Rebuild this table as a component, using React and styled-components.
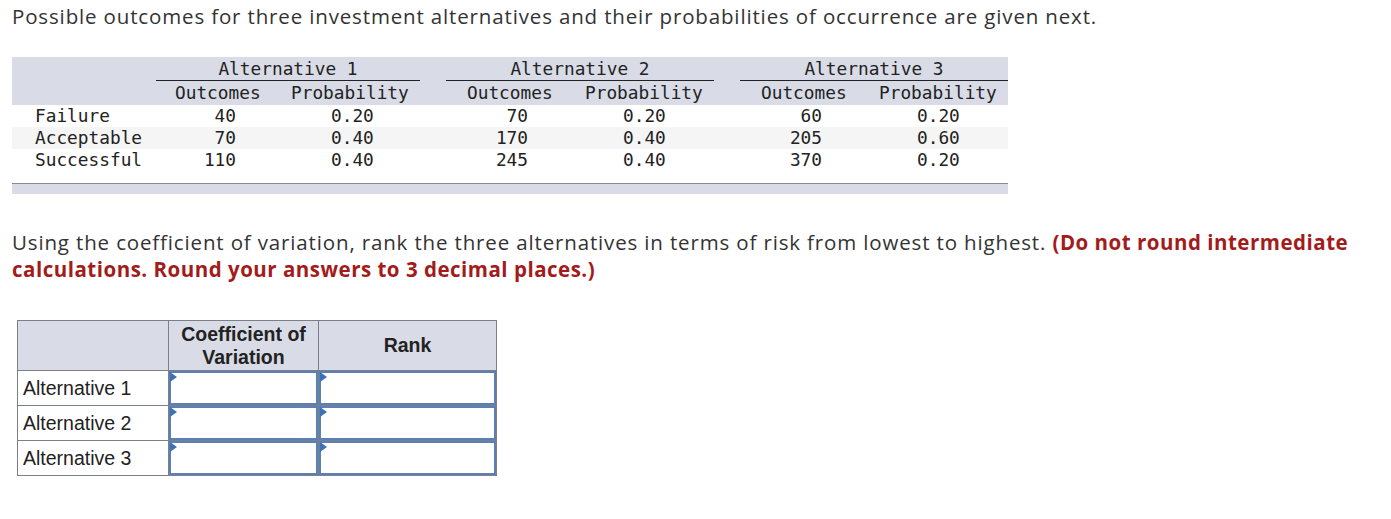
import React from 'react';
import styled, { createGlobalStyle } from 'styled-components';

const GlobalStyle = createGlobalStyle`
	body {
		margin: 0;
		background: #ffffff;
	}
`;

const Page = styled.div`
	padding: 3px 12px 0 12px;
	font-family: "Open Sans", "Liberation Sans", sans-serif;
	color: #333333;
`;

const Intro = styled.p`
	margin: 0;
	font-size: 20.5px;
	letter-spacing: 0.85px;
	line-height: 26px;
	font-weight: 400;
`;

const DataTable = styled.div`
	margin-top: 28px;
	width: 996px;
	display: grid;
	grid-template-columns: 144px 264px 26px 268px 26px 268px;
	font-family: "DejaVu Sans Mono", "Liberation Mono", monospace;
	font-size: 17.8px;
	color: #222222;
`;

const HeadBand = styled.div`
	grid-column: 1 / -1;
	display: grid;
	grid-template-columns: subgrid;
	background: #d9dce6;
	height: 48px;
`;

const Group = styled.div`
	display: grid;
	grid-template-columns: ${p => p.$first ? '114px 150px' : '118px 150px'};
	grid-template-rows: 24px 24px;
`;

const GroupTitle = styled.div`
	grid-column: 1 / -1;
	text-align: center;
	line-height: 23px;
	border-bottom: 1px solid #222222;
`;

const SubHead = styled.div`
	line-height: 24px;
	padding-left: ${p => p.$pad}px;
	white-space: nowrap;
`;

const DataRow = styled.div`
	grid-column: 1 / -1;
	display: grid;
	grid-template-columns: subgrid;
	height: ${p => p.$h}px;
	background: ${p => p.$striped ? '#f5f5f5' : '#ffffff'};
	line-height: ${p => p.$h}px;
`;

const RowLabel = styled.div`
	padding-left: 23px;
`;

const Values = styled.div`
	display: grid;
	grid-template-columns: ${p => p.$first ? '80px 184px' : '82px 186px'};
`;

const Outcome = styled.div`
	text-align: right;
`;

const Prob = styled.div`
	padding-left: ${p => p.$pad}px;
`;

const FootBar = styled.div`
	grid-column: 1 / -1;
	margin-top: 12px;
	height: 10px;
	background: #d9dce6;
	border-top: 1px solid #8a8a8a;
`;

const Question = styled.p`
	margin: 35px 0 0 0;
	font-size: 20.5px;
	letter-spacing: 0.85px;
	line-height: 27px;
`;

const Hint = styled.strong`
	color: #a31b1b;
	font-weight: 700;
	letter-spacing: 0.5px;
`;

const AnswerTable = styled.table`
	margin: 37px 0 0 5px;
	border-collapse: collapse;
	font-family: "Liberation Sans", Arial, sans-serif;
	font-size: 19.5px;
	color: #222222;
`;

const Th = styled.th`
	width: ${p => p.$w}px;
	height: 49px;
	padding: 0;
	background: #d9dce6;
	border: 1px solid #7a7f88;
	font-weight: 700;
	line-height: 23px;
	text-align: center;
	vertical-align: middle;
`;

const LabelCell = styled.td`
	height: 34px;
	padding: 0 0 0 5px;
	border: 1px solid #7a7f88;
	white-space: nowrap;
`;

const InputCell = styled.td`
	height: 34px;
	padding: 0;
	border: 1px solid #7a7f88;
	position: relative;
`;

const Field = styled.input`
	display: block;
	box-sizing: border-box;
	width: 100%;
	height: 34px;
	margin: 0;
	border: 2px solid #5b80b6;
	background: #ffffff;
	outline: none;
`;

const Marker = styled.span`
	position: absolute;
	left: 1px;
	top: 1px;
	width: 0;
	height: 0;
	border-top: 5px solid transparent;
	border-bottom: 5px solid transparent;
	border-left: 7px solid #3e70b4;
`;

const alternatives = [
	{ name: 'Alternative 1', outcomes: [40, 70, 110], probs: ['0.20', '0.40', '0.40'] },
	{ name: 'Alternative 2', outcomes: [70, 170, 245], probs: ['0.20', '0.40', '0.40'] },
	{ name: 'Alternative 3', outcomes: [60, 205, 370], probs: ['0.20', '0.60', '0.20'] },
];

const states = ['Failure', 'Acceptable', 'Successful'];

const App = () => {
	return (
		<Page>
			<GlobalStyle />
			<Intro>
				Possible outcomes for three investment alternatives and their probabilities of occurrence are given next.
			</Intro>

			<DataTable>
				<HeadBand>
					<div />
					{alternatives.map((alt, i) => (
						<React.Fragment key={alt.name}>
							{i > 0 && <div />}
							<Group $first={i === 0}>
								<GroupTitle>{alt.name}</GroupTitle>
								<SubHead $pad={i === 0 ? 19 : 21}>Outcomes</SubHead>
								<SubHead $pad={21}>Probability</SubHead>
							</Group>
						</React.Fragment>
					))}
				</HeadBand>

				{states.map((state, r) => (
					<DataRow key={state} $striped={r === 1} $h={22}>
						<RowLabel>{state}</RowLabel>
						{alternatives.map((alt, i) => (
							<React.Fragment key={alt.name}>
								{i > 0 && <div />}
								<Values $first={i === 0}>
									<Outcome>{alt.outcomes[r]}</Outcome>
									<Prob $pad={95}>{alt.probs[r]}</Prob>
								</Values>
							</React.Fragment>
						))}
					</DataRow>
				))}

				<FootBar />
			</DataTable>

			<Question>
				Using the coefficient of variation, rank the three alternatives in terms of risk from lowest to highest.{' '}
				<Hint>(Do not round intermediate calculations. Round your answers to 3 decimal places.)</Hint>
			</Question>

			<AnswerTable>
				<thead>
					<tr>
						<Th $w={150} />
						<Th $w={149}>Coefficient of<br />Variation</Th>
						<Th $w={177}>Rank</Th>
					</tr>
				</thead>
				<tbody>
					{alternatives.map(alt => (
						<tr key={alt.name}>
							<LabelCell>{alt.name}</LabelCell>
							<InputCell>
								<Marker />
								<Field type="text" />
							</InputCell>
							<InputCell>
								<Marker />
								<Field type="text" />
							</InputCell>
						</tr>
					))}
				</tbody>
			</AnswerTable>
		</Page>
	);
};

export default App;
